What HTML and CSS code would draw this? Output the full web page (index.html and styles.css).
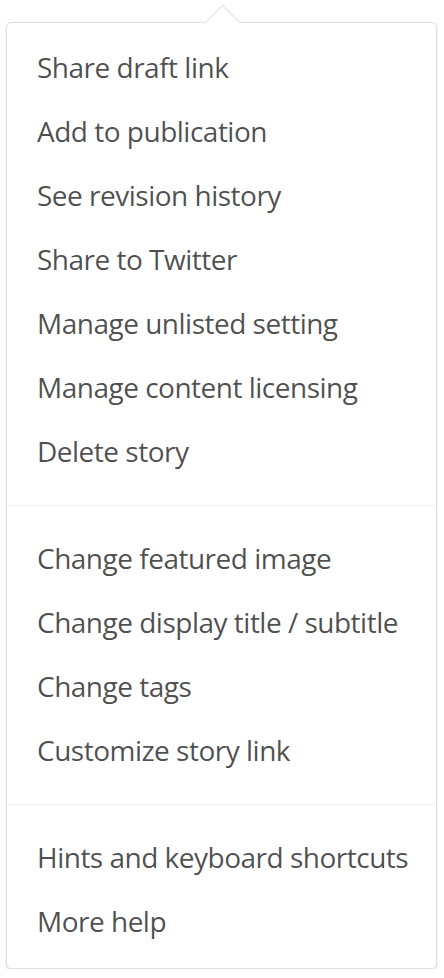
FILE: index.html
```html
<!DOCTYPE html>
<html lang="en">
<head>
  <meta charset="UTF-8">
  <title>Story menu</title>
  <meta name="viewport" content="width=device-width, initial-scale=1.0">
  <link rel="stylesheet" href="styles.css">
</head>
<body>

  <!-- Выпадающее меню истории (со стрелкой сверху) -->
  <div class="popover">
    <ul class="menu-section">
      <li class="menu-item">Share draft link</li>
      <li class="menu-item">Add to publication</li>
      <li class="menu-item">See revision history</li>
      <li class="menu-item">Share to Twitter</li>
      <li class="menu-item">Manage unlisted setting</li>
      <li class="menu-item">Manage content licensing</li>
      <li class="menu-item">Delete story</li>
    </ul>
    <ul class="menu-section">
      <li class="menu-item">Change featured image</li>
      <li class="menu-item">Change display title / subtitle</li>
      <li class="menu-item">Change tags</li>
      <li class="menu-item">Customize story link</li>
    </ul>
    <ul class="menu-section">
      <li class="menu-item">Hints and keyboard shortcuts</li>
      <li class="menu-item">More help</li>
    </ul>
  </div>

</body>
</html>
```

FILE: styles.css
```css
* {
  margin: 0;
  padding: 0;
  box-sizing: border-box;
}
body {
  font-family: 'Open Sans', 'Noto Sans', sans-serif;
  background: #fff;
  color: rgba(0,0,0,0.7);
}

/* Контейнер меню */
.popover {
  position: relative;
  margin: 22px 7px 0 6px;
  background: #fff;
  border: 1px solid #e0e0e0;
  border-radius: 5px;
  box-shadow: 0 1px 2px rgba(0,0,0,0.15);
}
/* Стрелка сверху по центру */
.popover::before {
  content: "";
  position: absolute;
  top: -13px;
  left: 50%;
  width: 24px;
  height: 24px;
  margin-left: -12px;
  background: #fff;
  border-top: 1px solid #e0e0e0;
  border-left: 1px solid #e0e0e0;
  transform: rotate(45deg);
}

/* Группы пунктов с разделителем */
.menu-section {
  list-style: none;
  padding: 20px 0 22px;
  position: relative; /* поверх стрелки */
}
.menu-section + .menu-section {
  border-top: 1px solid #f0f0f0;
}
.menu-section:first-child {
  padding-top: 12px;
}
.menu-section:last-child {
  padding-bottom: 15px;
}

.menu-item {
  height: 64px;
  line-height: 64px;
  padding: 0 30px;
  font-size: 28px;
  letter-spacing: -0.5px;
  white-space: nowrap;
  cursor: pointer;
}
```
